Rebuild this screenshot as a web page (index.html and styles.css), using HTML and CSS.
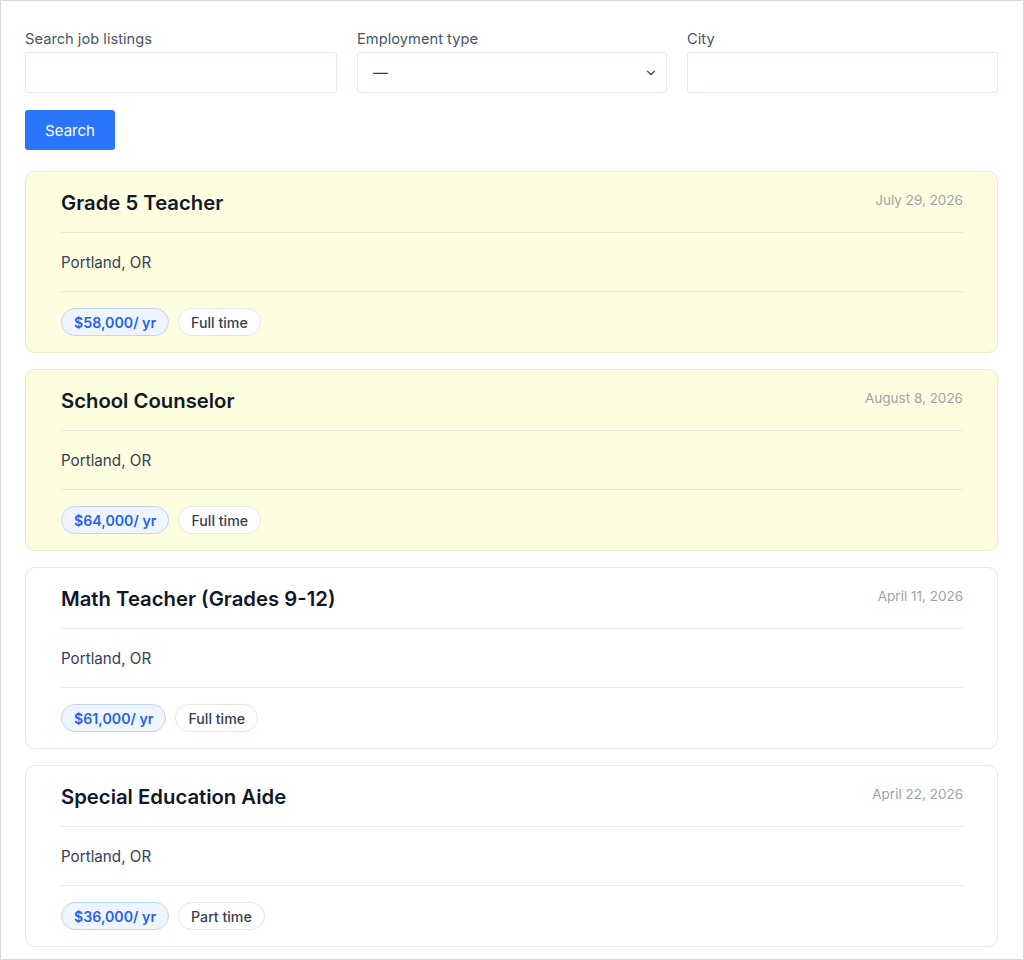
FILE: index.html
```html
<!DOCTYPE html>
<html lang="en">
<head>
<meta charset="utf-8">
<title>Job listings</title>
<link rel="stylesheet" href="styles.css">
</head>
<body>
<div class="frame">
  <form class="filters">
    <div class="fields">
      <label class="field">
        <span class="label">Search job listings</span>
        <span class="control"></span>
      </label>
      <label class="field">
        <span class="label">Employment type</span>
        <span class="control select">
          <span class="select-value">—</span>
          <svg class="chevron" width="10" height="6" viewBox="0 0 10 6"><path d="M1.5 1.2 L5 4.6 L8.5 1.2" fill="none" stroke="#4b5563" stroke-width="1.4" stroke-linecap="round" stroke-linejoin="round"/></svg>
        </span>
      </label>
      <label class="field">
        <span class="label">City</span>
        <span class="control"></span>
      </label>
    </div>
    <button type="button" class="btn">Search</button>
  </form>

  <div class="list">
    <article class="card featured">
      <div class="card-head">
        <h2 class="title">Grade 5 Teacher</h2>
        <span class="date">July 29, 2026</span>
      </div>
      <div class="loc">Portland, OR</div>
      <div class="tags"><span class="tag pay">$58,000/ yr</span><span class="tag">Full time</span></div>
    </article>
    <article class="card featured">
      <div class="card-head">
        <h2 class="title">School Counselor</h2>
        <span class="date">August 8, 2026</span>
      </div>
      <div class="loc">Portland, OR</div>
      <div class="tags"><span class="tag pay">$64,000/ yr</span><span class="tag">Full time</span></div>
    </article>
    <article class="card">
      <div class="card-head">
        <h2 class="title">Math Teacher (Grades 9-12)</h2>
        <span class="date">April 11, 2026</span>
      </div>
      <div class="loc">Portland, OR</div>
      <div class="tags"><span class="tag pay">$61,000/ yr</span><span class="tag">Full time</span></div>
    </article>
    <article class="card">
      <div class="card-head">
        <h2 class="title">Special Education Aide</h2>
        <span class="date">April 22, 2026</span>
      </div>
      <div class="loc">Portland, OR</div>
      <div class="tags"><span class="tag pay">$36,000/ yr</span><span class="tag">Part time</span></div>
    </article>
  </div>
</div>
</body>
</html>
```

FILE: styles.css
```css
* { box-sizing: border-box; }
html, body { margin: 0; padding: 0; background: #fff; }
body {
  font-family: Inter, "Noto Sans", sans-serif;
  color: #1f2937;
}
.frame {
  width: 1024px;
  height: 960px;
  border: 1px solid #d6d6d6;
  padding: 29px 25px 0 24px;
  overflow: hidden;
}
.filters { display: flex; flex-direction: column; align-items: flex-start; }
.fields {
  display: grid;
  grid-template-columns: 312px 310px 311px;
  column-gap: 20px;
  width: 100%;
}
.field { display: flex; flex-direction: column; }
.label {
  font-size: 14.7px;
  line-height: 18px;
  color: #4b5563;
  margin-bottom: 4px;
}
.control {
  height: 41px;
  border: 1px solid #e2e8f0;
  border-radius: 3px;
  background: #fff;
}
.select {
  display: flex;
  align-items: center;
  justify-content: space-between;
  padding: 0 10px 0 15px;
}
.select-value { font-size: 15px; color: #374151; }
.chevron { display: block; }
.btn {
  margin-top: 17px;
  width: 90px;
  height: 40px;
  border: 0;
  border-radius: 3px;
  background: #2b75fa;
  color: #fff;
  font-family: inherit;
  font-size: 15px;
  padding: 0;
}
.list {
  margin-top: 21px;
  display: flex;
  flex-direction: column;
  gap: 16px;
}
.card {
  height: 182px;
  border: 1px solid #e5e7eb;
  border-radius: 10px;
  padding: 17px 34px 0 35px;
  background: #fff;
}
.card.featured { background: #fefde0; border-color: #eae9cf; }
.card-head {
  display: flex;
  justify-content: space-between;
  align-items: flex-start;
  height: 44px;
  border-bottom: 1px solid #e5e7eb;
}
.featured .card-head, .featured .loc { border-color: #e8e8d8; }
.title {
  margin: 0;
  font-size: 20.3px;
  line-height: 28px;
  font-weight: 600;
  color: #111827;
}
.date {
  font-size: 13.5px;
  line-height: 20px;
  color: #9ca3af;
  margin-top: 1px;
}
.loc {
  height: 59px;
  border-bottom: 1px solid #e5e7eb;
  font-size: 15.2px;
  line-height: 20px;
  padding-top: 20px;
  color: #374151;
}
.tags {
  display: flex;
  gap: 9px;
  margin-top: 16px;
}
.tag {
  display: inline-flex;
  align-items: center;
  height: 28px;
  padding: 0 12px;
  border: 1px solid #e5e7eb;
  border-radius: 14px;
  background: #fff;
  font-size: 14.2px;
  font-weight: 500;
  color: #374151;
}
.tag.pay {
  background: #eef5ff;
  border-color: #bcd7fb;
  color: #2563eb;
  font-weight: 600;
}
```
